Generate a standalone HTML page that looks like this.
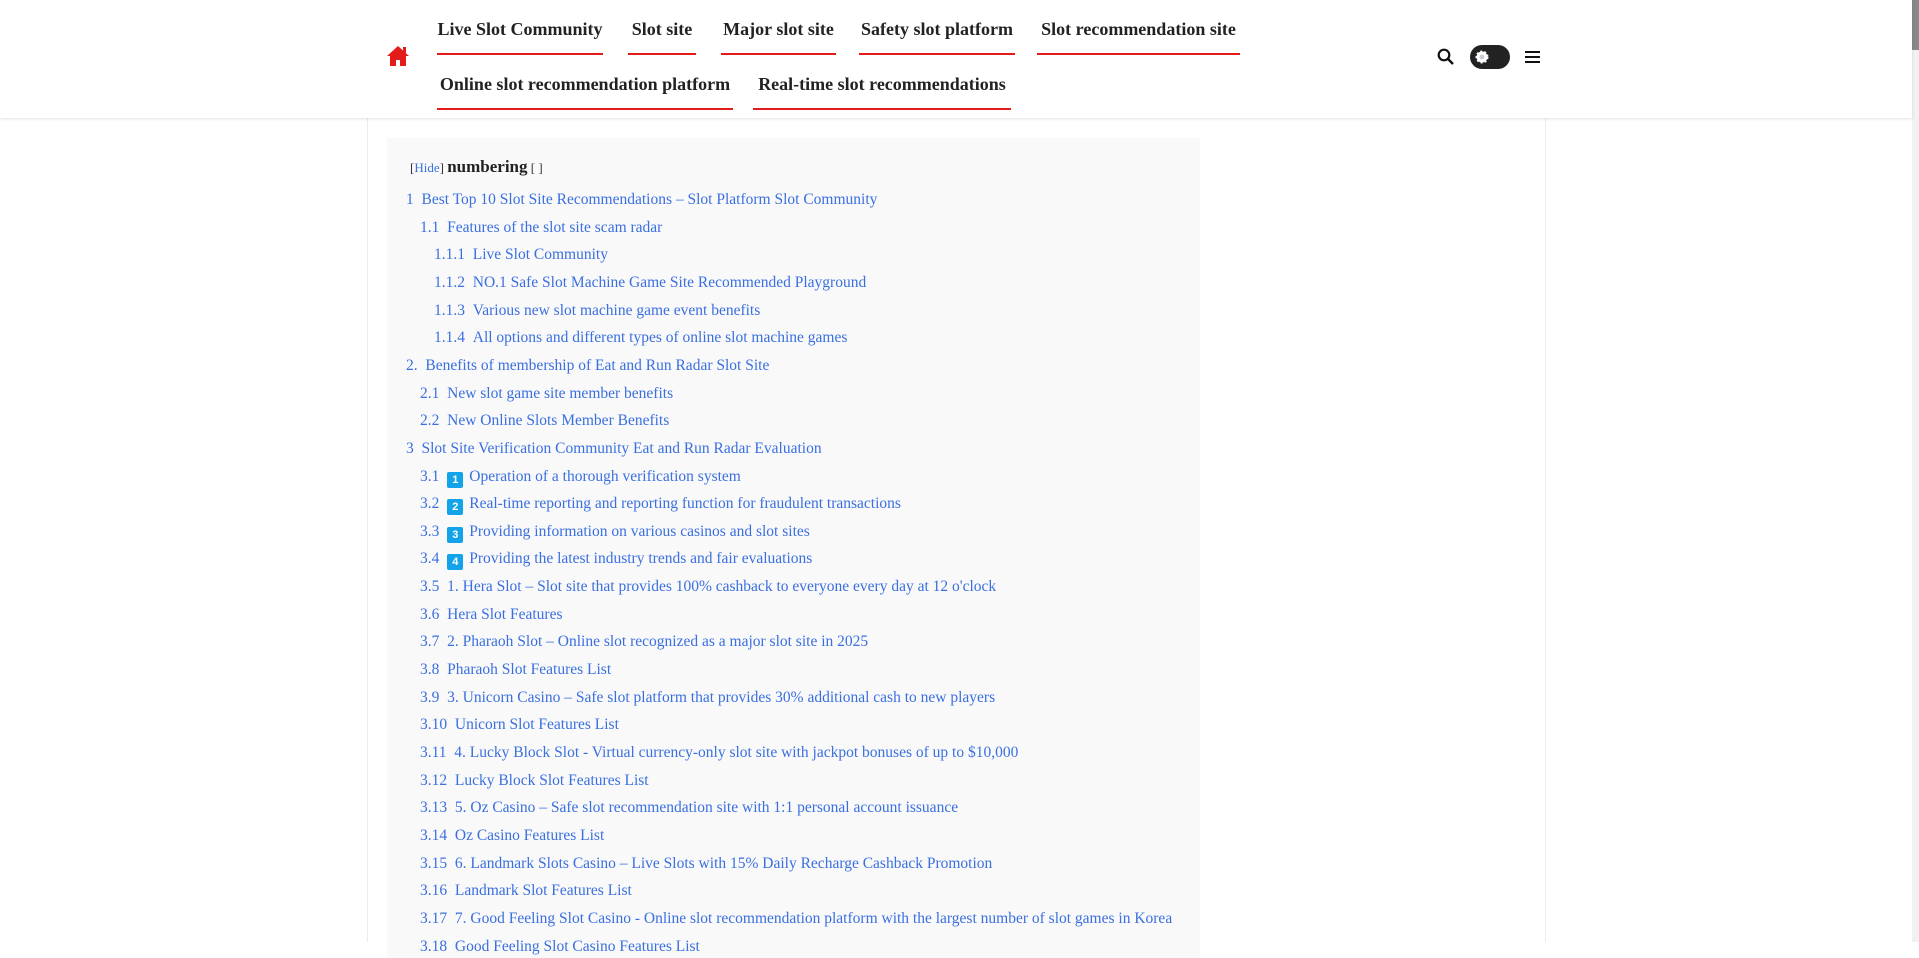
<!DOCTYPE html>
<html><head><meta charset="utf-8"><style>
*{margin:0;padding:0;box-sizing:border-box}
body{width:1919px;height:942px;overflow:hidden;background:#fff;font-family:"Liberation Serif",serif;position:relative}
.vl{position:absolute;top:100px;bottom:0;width:1px;background:#ececec}
header{position:absolute;left:0;top:0;width:1912px;height:118px;background:#fff;box-shadow:0 1px 3px rgba(0,0,0,.12);z-index:2}
.nav a{position:absolute;font-weight:bold;font-size:18px;color:#222;border-bottom:2px solid #e31b1b;height:35px;text-align:center;text-decoration:none;line-height:18px}
.toc{position:absolute;left:387px;top:138px;width:813px;height:820px;background:#f9f9f9}
.toc div{position:absolute;font-size:15.5px;color:#3a6fe0;white-space:nowrap;line-height:18px}
.h{position:absolute;left:410px;top:157px;font-size:13px;color:#333}
.h b{font-size:17px;color:#222}
.k{display:inline-block;width:16px;height:16px;background:#13a3e8;color:#fff;font:bold 11px "Liberation Sans",sans-serif;text-align:center;line-height:16px;border-radius:2px;vertical-align:-2px;margin:0 6px 0 4px}
.sb{position:absolute;right:0;top:0;width:7px;height:942px;background:#f1f1f1}
</style></head><body>
<div class="vl" style="left:367px"></div><div class="vl" style="left:1545px"></div>
<header>
<svg style="position:absolute;left:386px;top:45px" width="24" height="22" viewBox="0 0 24 22"><path d="M12 1 1 11h3v10h6v-6h4v6h6V11h3z" fill="#e31b1b"/><rect x="17" y="2" width="3" height="6" fill="#e31b1b"/></svg>
<div class="nav">
<a style="left:437px;top:20px;width:166px">Live Slot Community</a>
<a style="left:628px;top:20px;width:68px">Slot site</a>
<a style="left:721px;top:20px;width:115px">Major slot site</a>
<a style="left:859px;top:20px;width:156px">Safety slot platform</a>
<a style="left:1037px;top:20px;width:203px">Slot recommendation site</a>
<a style="left:437px;top:75px;width:296px">Online slot recommendation platform</a>
<a style="left:753px;top:75px;width:258px">Real-time slot recommendations</a>
</div>
<svg style="position:absolute;left:1437px;top:48px" width="18" height="18" viewBox="0 0 18 18"><circle cx="7" cy="7" r="5.3" fill="none" stroke="#111" stroke-width="2.2"/><path d="M11 11l5 5" stroke="#111" stroke-width="2.4"/></svg>
<div style="position:absolute;left:1470px;top:45px;width:40px;height:24px;border-radius:12px;background:#222"></div>
<svg style="position:absolute;left:1474px;top:49px" width="16" height="16" viewBox="0 0 16 16"><circle cx="8" cy="8" r="5.5" fill="#fff" stroke="#fff" stroke-width="2" stroke-dasharray="2 2"/><circle cx="8" cy="8" r="2.5" fill="#ccd"/></svg>
<svg style="position:absolute;left:1525px;top:50px" width="15" height="14" viewBox="0 0 15 14"><path d="M0 2h15M0 7h15M0 12h15" stroke="#111" stroke-width="2"/></svg>
</header>
<div class="toc"></div>
<div class="h"><span>[<span style="color:#3a6fe0">Hide</span>]</span> <b>numbering</b> [ ]</div>
<div class="toc" style="background:none">
<div style="left:19px;top:53px">1 &nbsp;Best Top 10 Slot Site Recommendations – Slot Platform Slot Community</div>
<div style="left:33px;top:81px">1.1 &nbsp;Features of the slot site scam radar</div>
<div style="left:47px;top:108px">1.1.1 &nbsp;Live Slot Community</div>
<div style="left:47px;top:136px">1.1.2 &nbsp;NO.1 Safe Slot Machine Game Site Recommended Playground</div>
<div style="left:47px;top:164px">1.1.3 &nbsp;Various new slot machine game event benefits</div>
<div style="left:47px;top:191px">1.1.4 &nbsp;All options and different types of online slot machine games</div>
<div style="left:19px;top:219px">2. &nbsp;Benefits of membership of Eat and Run Radar Slot Site</div>
<div style="left:33px;top:247px">2.1 &nbsp;New slot game site member benefits</div>
<div style="left:33px;top:274px">2.2 &nbsp;New Online Slots Member Benefits</div>
<div style="left:19px;top:302px">3 &nbsp;Slot Site Verification Community Eat and Run Radar Evaluation</div>
<div style="left:33px;top:330px">3.1 <span class="k">1</span>Operation of a thorough verification system</div>
<div style="left:33px;top:357px">3.2 <span class="k">2</span>Real-time reporting and reporting function for fraudulent transactions</div>
<div style="left:33px;top:385px">3.3 <span class="k">3</span>Providing information on various casinos and slot sites</div>
<div style="left:33px;top:412px">3.4 <span class="k">4</span>Providing the latest industry trends and fair evaluations</div>
<div style="left:33px;top:440px">3.5 &nbsp;1. Hera Slot – Slot site that provides 100% cashback to everyone every day at 12 o'clock</div>
<div style="left:33px;top:468px">3.6 &nbsp;Hera Slot Features</div>
<div style="left:33px;top:495px">3.7 &nbsp;2. Pharaoh Slot – Online slot recognized as a major slot site in 2025</div>
<div style="left:33px;top:523px">3.8 &nbsp;Pharaoh Slot Features List</div>
<div style="left:33px;top:551px">3.9 &nbsp;3. Unicorn Casino – Safe slot platform that provides 30% additional cash to new players</div>
<div style="left:33px;top:578px">3.10 &nbsp;Unicorn Slot Features List</div>
<div style="left:33px;top:606px">3.11 &nbsp;4. Lucky Block Slot - Virtual currency-only slot site with jackpot bonuses of up to $10,000</div>
<div style="left:33px;top:634px">3.12 &nbsp;Lucky Block Slot Features List</div>
<div style="left:33px;top:661px">3.13 &nbsp;5. Oz Casino – Safe slot recommendation site with 1:1 personal account issuance</div>
<div style="left:33px;top:689px">3.14 &nbsp;Oz Casino Features List</div>
<div style="left:33px;top:717px">3.15 &nbsp;6. Landmark Slots Casino – Live Slots with 15% Daily Recharge Cashback Promotion</div>
<div style="left:33px;top:744px">3.16 &nbsp;Landmark Slot Features List</div>
<div style="left:33px;top:772px">3.17 &nbsp;7. Good Feeling Slot Casino - Online slot recommendation platform with the largest number of slot games in Korea</div>
<div style="left:33px;top:800px">3.18 &nbsp;Good Feeling Slot Casino Features List</div>
</div>
<div class="sb"><div style="position:absolute;top:0;left:0;width:7px;height:50px;background:#888"></div></div>
</body></html>
